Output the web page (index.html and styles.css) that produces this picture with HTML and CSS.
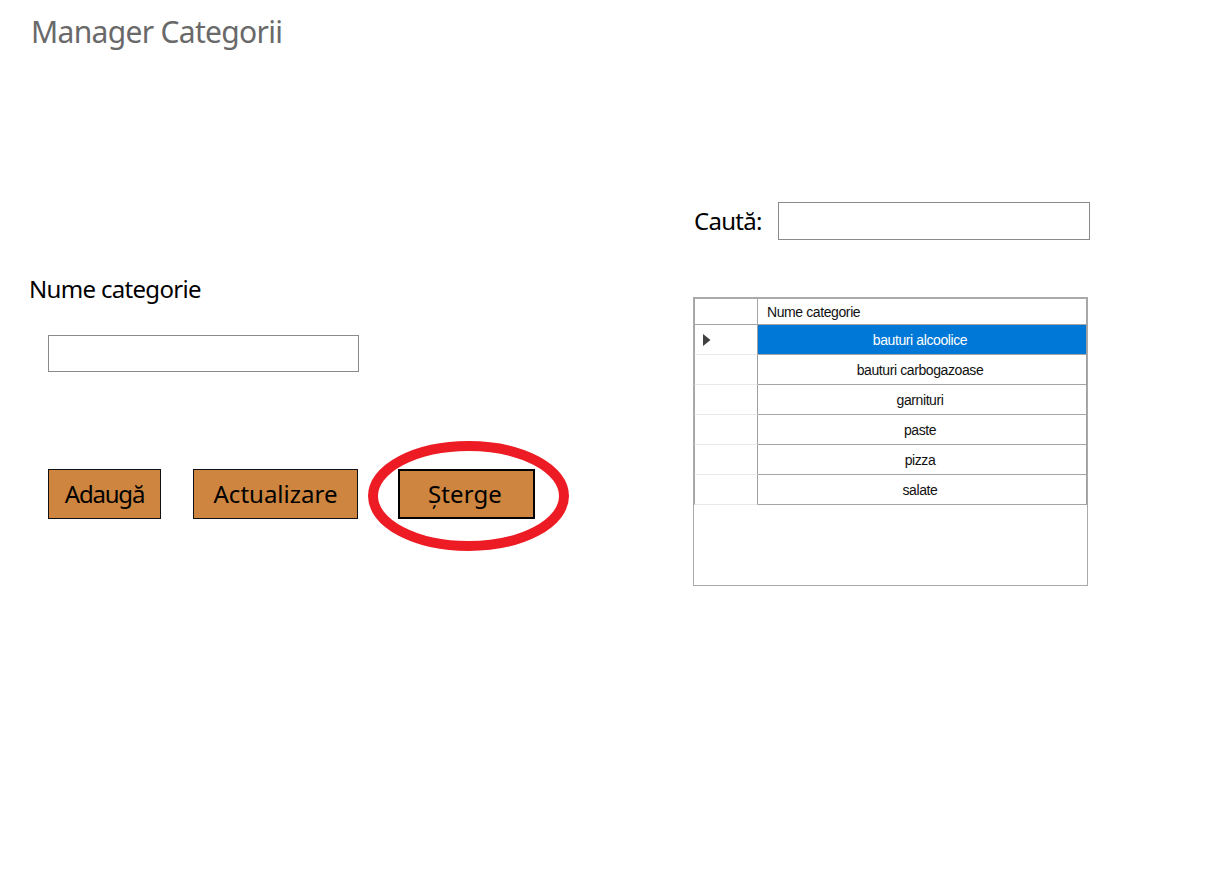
FILE: index.html
```html
<!DOCTYPE html>
<html lang="ro">
<head>
<meta charset="utf-8">
<title>Manager Categorii</title>
<link rel="stylesheet" href="styles.css">
</head>
<body>
<main class="page">
  <section class="editor">
    <h1 class="title"><span>Manager Categorii</span></h1>
    <label class="label" for="nume">Nume categorie</label>
    <input class="field" id="nume" type="text">
    <div class="actions">
      <button class="btn btn-add"><span>Adaugă</span></button>
      <button class="btn btn-update"><span>Actualizare</span></button>
      <div class="marked">
        <button class="btn btn-delete"><span>Șterge</span></button>
        <svg class="ring" width="201" height="110" viewBox="0 0 201 110"><ellipse cx="100.5" cy="55" rx="95.5" ry="50"/></svg>
      </div>
    </div>
  </section>
  <section class="browser">
    <div class="search">
      <label class="search-label" for="cauta">Caută:</label>
      <input class="field search-field" id="cauta" type="text">
    </div>
    <div class="list">
      <div class="grid">
        <div class="corner"></div><div class="head"><span>Nume categorie</span></div>
        <div class="mark"><svg width="8" height="12" viewBox="0 0 8 12"><path d="M0 0L7.500 6L0 12Z"/></svg></div><div class="cell selected"><span>bauturi alcoolice</span></div>
        <div class="mark"></div><div class="cell"><span>bauturi carbogazoase</span></div>
        <div class="mark"></div><div class="cell"><span>garnituri</span></div>
        <div class="mark"></div><div class="cell"><span>paste</span></div>
        <div class="mark"></div><div class="cell"><span>pizza</span></div>
        <div class="mark"></div><div class="cell"><span>salate</span></div>
      </div>
    </div>
  </section>
</main>
</body>
</html>
```
FILE: styles.css
```css
* { box-sizing: border-box; }
body { margin: 0; background: #fff; color: #000; font-family: "Comic Sans MS", "Noto Sans", sans-serif; }
.page { display: grid; grid-template-columns: 693px 1fr; width: 1225px; height: 875px; overflow: hidden; }
.editor { display: flex; flex-direction: column; align-items: flex-start; padding: 12px 0 0 30px; }
.title { margin: 0 0 0 1px; height: 40px; font-size: 30px; line-height: 40px; font-weight: 400; letter-spacing: -0.68px; color: #696969; white-space: nowrap; }
.label { margin: 220px 0 0 -1px; height: 33px; font-size: 24px; line-height: 33px; letter-spacing: -0.68px; white-space: nowrap; }
.field { display: block; width: 312px; height: 38px; margin: 0; padding: 0 8px; border: 1px solid #8a8a8a; border-radius: 0; background: #fff; outline: 0; font: 22px "Comic Sans MS", "Noto Sans", sans-serif; }
.editor .field { width: 311px; height: 37px; margin: 30px 0 0 18px; }
.actions { display: flex; margin: 97px 0 0 18px; }
.btn { display: flex; align-items: center; justify-content: center; height: 50px; margin: 0; padding: 0; border: 1px solid #111; border-radius: 0; background: #cd853f; color: #000; font: 24px/32px "Comic Sans MS", "Noto Sans", sans-serif; white-space: nowrap; }
.btn-add { width: 113px; letter-spacing: -1.2px; }
.btn-update { width: 165px; margin-left: 32px; letter-spacing: 0; }
.btn-delete { width: 137px; padding-right: 3px; border: 2px solid #000; letter-spacing: 0.1px; }
.marked { position: relative; margin-left: 40px; }
.ring { position: absolute; left: -30px; top: -28px; fill: none; stroke: #ed1c24; stroke-width: 10; pointer-events: none; }
.browser { padding-top: 202px; }
.search { display: flex; align-items: center; height: 38px; }
.search-label { width: 85px; padding-left: 1px; font-size: 24px; line-height: 32px; letter-spacing: -0.7px; white-space: nowrap; }
.list { width: 395px; height: 289px; margin-top: 57px; border: 1px solid #aaa; }
.grid { display: grid; grid-template-columns: 64px 329px; grid-template-rows: 26px repeat(6, 30px); border-top: 1px solid #aaa; font: 14px "Liberation Sans", Arial, sans-serif; letter-spacing: -0.4px; color: #111; }
.corner, .head { border-right: 1px solid #a5a5a5; border-bottom: 1px solid #a5a5a5; }
.corner, .mark { border-left: 1px solid #a5a5a5; }
.head { display: flex; align-items: center; padding-left: 9px; }
.mark { display: flex; align-items: center; padding-left: 8px; border-right: 1px solid #a0a0a0; border-bottom: 1px solid #e9e9e9; fill: #404040; }
.cell { display: flex; align-items: center; justify-content: center; padding-right: 4px; border-right: 1px solid #a0a0a0; border-bottom: 1px solid #a5a5a5; }
.selected { background: #0078d7; color: #fff; }
```
